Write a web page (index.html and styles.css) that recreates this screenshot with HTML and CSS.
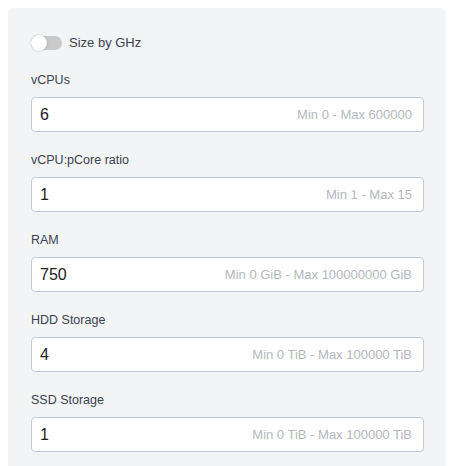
FILE: index.html
```html
<!DOCTYPE html>
<html>
<head>
<meta charset="utf-8">
<link rel="stylesheet" href="styles.css">
</head>
<body>
<div class="panel">
  <div class="toggle-row">
    <span class="switch"><span class="knob"></span></span>
    <span class="toggle-label">Size by GHz</span>
  </div>
  <div class="fields">
    <div class="field">
      <div class="label">vCPUs</div>
      <div class="input"><span class="value">6</span><span class="hint">Min 0 - Max 600000</span></div>
    </div>
    <div class="field">
      <div class="label">vCPU:pCore ratio</div>
      <div class="input"><span class="value">1</span><span class="hint">Min 1 - Max 15</span></div>
    </div>
    <div class="field">
      <div class="label">RAM</div>
      <div class="input"><span class="value">750</span><span class="hint">Min 0 GiB - Max 100000000 GiB</span></div>
    </div>
    <div class="field">
      <div class="label">HDD Storage</div>
      <div class="input"><span class="value">4</span><span class="hint">Min 0 TiB - Max 100000 TiB</span></div>
    </div>
    <div class="field">
      <div class="label">SSD Storage</div>
      <div class="input"><span class="value">1</span><span class="hint">Min 0 TiB - Max 100000 TiB</span></div>
    </div>
  </div>
</div>
</body>
</html>
```
FILE: styles.css
```css
html, body {
  margin: 0;
  padding: 0;
  background: #ffffff;
  font-family: "Liberation Sans", Arial, sans-serif;
}
.panel {
  margin: 8px 0 0 8px;
  width: 438px;
  box-sizing: border-box;
  height: 470px;
  background: #f3f4f6;
  border-radius: 6px 6px 0 0;
  padding: 28px 22px 0 23px;
}
.toggle-row {
  display: flex;
  align-items: center;
  height: 14px;
  gap: 7px;
}
.switch {
  position: relative;
  width: 31px;
  height: 14px;
  border-radius: 7px;
  background: #c9c9c9;
  flex: none;
}
.knob {
  position: absolute;
  left: 0;
  top: -1px;
  width: 16px;
  height: 16px;
  border-radius: 50%;
  background: #ffffff;
  box-shadow: 0 0 2px rgba(0,0,0,0.3);
}
.toggle-label {
  font-size: 13px;
  color: #3b4150;
  line-height: 16px;
}
.fields {
  margin-top: 22px;
  display: flex;
  flex-direction: column;
  gap: 20px;
}
.label {
  font-size: 12.5px;
  line-height: 16px;
  color: #3b4150;
  margin-bottom: 9px;
}
.input {
  height: 35px;
  box-sizing: border-box;
  background: #ffffff;
  border: 1px solid #c6cad2;
  border-radius: 4px;
  display: flex;
  align-items: center;
  justify-content: space-between;
  padding: 0 11px 0 8px;
}
.value {
  font-size: 16px;
  color: #222222;
}
.hint {
  font-size: 13px;
  color: #b3b8c0;
}
```
